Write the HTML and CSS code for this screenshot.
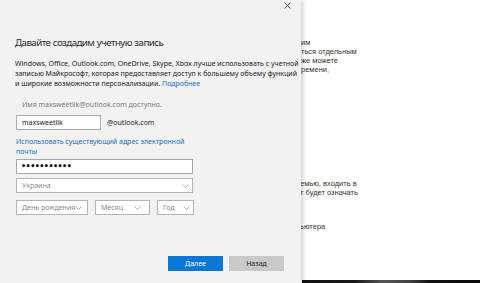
FILE: index.html
```
<!DOCTYPE html>
<html lang="ru">
<head>
  <meta charset="UTF-8" />
  <meta name="viewport" content="width=device-width, initial-scale=1" />
  <title>Создание учетной записи</title>
  <link rel="stylesheet" href="styles.css">
</head>
<body>
  <div class="screen">
    <div class="backdrop">
      <p class="bg-text first">им<br>ться отдельным<br>же можете<br>ремени,</p>
      <p class="bg-text second">емью, входить в<br>т будет означать</p>
      <p class="bg-text third">ьютера</p>
      <div class="taskbar"></div>
    </div>

    <div class="dialog">
      <button class="close" aria-label="Закрыть">
        <svg width="7" height="7" viewBox="0 0 7 7"><path d="M0.5 0.5 L6.5 6.5 M6.5 0.5 L0.5 6.5" stroke="#444" stroke-width="0.9" fill="none"/></svg>
      </button>

      <h1 class="title">Давайте создадим учетную запись</h1>
      <p class="intro">Windows, Office, Outlook.com, OneDrive, Skype, Xbox лучше использовать с учетной<br>записью Майкрософт, которая предоставляет доступ к большему объему функций<br>и широкие возможности персонализации. <a href="#" class="link">Подробнее</a></p>

      <p class="hint">Имя maxsweetlik@outlook.com доступно.</p>
      <div class="email-row">
        <div class="field name">maxsweetlik</div>
        <span class="domain">@outlook.com</span>
      </div>
      <a href="#" class="link alt-link">Использовать существующий адрес электронной<br>почты</a>

      <div class="field password">•••••••••••</div>
      <div class="field select wide">
        <span>Украина</span>
        <svg class="chev" width="7" height="4" viewBox="0 0 7 4"><path d="M0.5 0.5 L3.5 3.5 L6.5 0.5" stroke="#999" stroke-width="0.8" fill="none"/></svg>
      </div>
      <div class="dob-row">
        <div class="field select day">
          <span>День рождения</span>
          <svg class="chev" width="7" height="4" viewBox="0 0 7 4"><path d="M0.5 0.5 L3.5 3.5 L6.5 0.5" stroke="#999" stroke-width="0.8" fill="none"/></svg>
        </div>
        <div class="field select month">
          <span>Месяц</span>
          <svg class="chev" width="7" height="4" viewBox="0 0 7 4"><path d="M0.5 0.5 L3.5 3.5 L6.5 0.5" stroke="#999" stroke-width="0.8" fill="none"/></svg>
        </div>
        <div class="field select year">
          <span>Год</span>
          <svg class="chev" width="7" height="4" viewBox="0 0 7 4"><path d="M0.5 0.5 L3.5 3.5 L6.5 0.5" stroke="#999" stroke-width="0.8" fill="none"/></svg>
        </div>
      </div>

      <div class="actions">
        <button class="btn primary">Далее</button>
        <button class="btn secondary">Назад</button>
      </div>
    </div>
  </div>
</body>
</html>
```

FILE: styles.css
```
body {
  margin: 0;
  padding: 0;
  font-family: "Noto Sans", "Open Sans", sans-serif;
  background-color: #fff;
  color: #333;
}
.screen {
  position: relative;
  width: 480px;
  height: 283px;
  overflow: hidden;
}

/* page behind the dialog */
.backdrop {
  height: 283px;
  padding-left: 297px;
  display: flex;
  flex-direction: column;
  font-family: "Liberation Sans", Arial, sans-serif;
  font-size: 7.5px;
  line-height: 9px;
  color: #333;
}
.bg-text {
  margin: 0;
}
.bg-text.first {
  margin-top: 38px;
  padding-left: 4px;
}
.bg-text.second {
  margin-top: 105px;
  padding-left: 3px;
}
.bg-text.third {
  margin-top: 25px;
  padding-left: 3px;
}
.taskbar {
  margin-top: auto;
  height: 3px;
  margin-left: 5px;
  background: linear-gradient(90deg, #111 0%, #1a1a1a 30%, #555 45%, #444 60%, #111 72%, #0a0a0a 100%);
}

/* dialog */
.dialog {
  position: absolute;
  top: 0;
  left: 0;
  width: 285px;
  height: 283px;
  padding-left: 16px;
  background-color: #f2f2f2;
  box-shadow: 2px 0 4px rgba(0,0,0,0.18);
  display: flex;
  flex-direction: column;
  align-items: flex-start;
}
.close {
  position: absolute;
  top: 1px;
  right: 9px;
  width: 9px;
  height: 9px;
  padding: 0;
  border: none;
  background: none;
  display: flex;
  align-items: center;
  justify-content: center;
}
.title {
  margin: 35px 0 0 -1px;
  font-size: 9.8px;
  line-height: 15px;
  letter-spacing: -0.6px;
  word-spacing: 0.5px;
  font-weight: 400;
  color: #2b2b2b;
  white-space: nowrap;
}
.intro {
  margin: 9px 0 0 -1px;
  font-size: 7px;
  line-height: 10px;
  color: #222;
  white-space: nowrap;
}
.link {
  color: #1a6fc0;
  text-decoration: none;
}
.hint {
  margin: 11px 0 0 6px;
  font-size: 7px;
  line-height: 10px;
  color: #7a7a7a;
}
.email-row {
  margin-top: 5px;
  display: flex;
  align-items: center;
  gap: 6px;
}
.field {
  box-sizing: border-box;
  height: 15px;
  border: 1px solid #a8a8a8;
  background-color: #fff;
  font-size: 7px;
  line-height: 13px;
  padding: 0 5px;
  color: #222;
  white-space: nowrap;
}
.name {
  width: 85px;
}
.domain {
  font-size: 7px;
  color: #222;
}
.alt-link {
  margin-top: 7px;
  font-size: 7px;
  line-height: 9.5px;
}
.password {
  width: 177px;
  margin-top: 3px;
  padding-left: 4px;
  font-family: "DejaVu Sans", sans-serif;
  font-size: 8px;
  font-weight: 700;
  letter-spacing: -0.55px;
  color: #111;
}
.select {
  display: flex;
  align-items: center;
  justify-content: space-between;
  color: #8a8a8a;
  border-color: #b5b5b5;
}
.wide {
  width: 177px;
  margin-top: 4px;
  padding-right: 3px;
}
.dob-row {
  margin-top: 7px;
  display: flex;
  gap: 7px;
}
.day {
  width: 72px;
  padding-right: 9px;
}
.month {
  width: 55px;
  padding-right: 8px;
}
.year {
  width: 37px;
  padding-right: 3px;
}
.chev {
  flex-shrink: 0;
}
.actions {
  margin: 41px 0 0 152px;
  display: flex;
  gap: 6px;
}
.btn {
  width: 55px;
  height: 15px;
  border: none;
  padding: 0;
  font-family: inherit;
  font-size: 7px;
  color: #fff;
}
.primary {
  background-color: #0a78d4;
}
.secondary {
  background-color: #c9c9c9;
  color: #222;
}
```
